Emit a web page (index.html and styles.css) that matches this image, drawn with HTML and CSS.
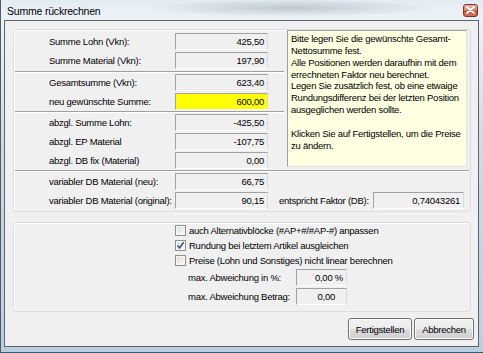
FILE: index.html
```html
<!DOCTYPE html>
<html lang="de">
<head>
<meta charset="utf-8">
<title>Summe rückrechnen</title>
<link rel="stylesheet" href="styles.css">
</head>
<body>
<div class="window">
  <div class="titlebar">
    <span class="title">Summe rückrechnen</span>
    <span class="close">
      <svg width="9" height="8" viewBox="0 0 9 8"><path d="M1 1 L8 7 M8 1 L1 7" stroke="#fff" stroke-width="1.8" stroke-linecap="round"/></svg>
    </span>
  </div>
  <div class="client">
    <div class="group group-calc">
      <div class="calc-top">
        <div class="calc-left">
          <div class="row"><span class="label">Summe Lohn (Vkn):</span><span class="field">425,50</span></div>
          <div class="row"><span class="label">Summe Material (Vkn):</span><span class="field">197,90</span></div>
          <div class="sep sep-first"></div>
          <div class="row"><span class="label">Gesamtsumme (Vkn):</span><span class="field">623,40</span></div>
          <div class="row"><span class="label">neu gewünschte Summe:</span><span class="field field-yellow">600,00</span></div>
          <div class="sep"></div>
          <div class="row"><span class="label">abzgl. Summe Lohn:</span><span class="field">-425,50</span></div>
          <div class="row"><span class="label">abzgl. EP Material</span><span class="field">-107,75</span></div>
          <div class="row"><span class="label">abzgl. DB fix (Material)</span><span class="field">0,00</span></div>
        </div>
        <div class="info">Bitte legen Sie die gewünschte Gesamt-<br>Nettosumme fest.<br>Alle Positionen werden daraufhin mit dem<br>errechneten Faktor neu berechnet.<br>Legen Sie zusätzlich fest, ob eine etwaige<br>Rundungsdifferenz bei der letzten Position<br>ausgeglichen werden sollte.<br><br>Klicken Sie auf Fertigstellen, um die Preise<br>zu ändern.</div>
      </div>
      <div class="sep sep-full"></div>
      <div class="calc-bottom">
        <div class="row"><span class="label">variabler DB Material (neu):</span><span class="field">66,75</span></div>
        <div class="row"><span class="label">variabler DB Material (original):</span><span class="field">90,15</span><span class="label label-faktor">entspricht Faktor (DB):</span><span class="field field-faktor">0,74043261</span></div>
      </div>
    </div>
    <div class="group group-options">
      <div class="check-row"><span class="checkbox"></span><span>auch Alternativblöcke (#AP+#/#AP-#) anpassen</span></div>
      <div class="check-row"><span class="checkbox checked"><svg width="9" height="9" viewBox="0 0 9 9"><path d="M1.5 4.5 L3.6 7 L7.6 1.2" fill="none" stroke="#3d5291" stroke-width="1.6"/></svg></span><span>Rundung bei letztem Artikel ausgleichen</span></div>
      <div class="check-row"><span class="checkbox"></span><span>Preise (Lohn und Sonstiges) nicht linear berechnen</span></div>
      <div class="max-row"><span class="max-label">max. Abweichung in %:</span><span class="field field-small">0,00 %</span></div>
      <div class="max-row"><span class="max-label">max. Abweichung Betrag:</span><span class="field field-small field-betrag">0,00</span></div>
    </div>
    <div class="buttons">
      <button class="btn btn-ok">Fertigstellen</button>
      <button class="btn btn-cancel">Abbrechen</button>
    </div>
  </div>
</div>
</body>
</html>
```

FILE: styles.css
```css
* { box-sizing: border-box; }
html, body { margin: 0; padding: 0; }
body {
  width: 483px;
  height: 353px;
  overflow: hidden;
  font-family: "Liberation Sans", Arial, sans-serif;
  font-size: 9.5px;
  letter-spacing: -0.25px;
  color: #000;
  background: #2f6f7f;
}
.window {
  width: 483px;
  height: 353px;
  display: flex;
  flex-direction: column;
  padding: 0 4px 5px 3px;
  border-left: 1px solid #4f5b66;
  border-bottom: 1px solid #24606e;
  background:
    radial-gradient(ellipse 140px 9px at 290px 8px, rgba(120,130,140,0.35), rgba(120,130,140,0) 100%),
    linear-gradient(to bottom, #e3ebf3 0, #edf2f7 18px, #cfdbe6 40%, #bccede 100%);
}
.titlebar {
  height: 20px;
  display: flex;
  align-items: center;
  padding: 2px 1px 0 3px;
}
.title {
  flex: 1;
  font-size: 10.5px;
  letter-spacing: -0.2px;
  color: #000;
}
.close {
  width: 15px;
  height: 13px;
  margin-top: -2px;
  display: flex;
  align-items: center;
  justify-content: center;
  border: 1px solid #7a3328;
  border-radius: 3px;
  background: linear-gradient(to bottom, #eab3a4 0, #d98a76 45%, #c4503c 55%, #d5725c 100%);
}
.client {
  flex: 1;
  display: flex;
  flex-direction: column;
  background: #f0f0f0;
  border: 1px solid #5a6570;
}
.group {
  margin: 0 7px 0 8px;
  border: 1px solid #d5dfe5;
  border-radius: 3px;
  box-shadow: inset 1px 1px 0 #ffffff;
}
.group-calc {
  margin-top: 8px;
  height: 183px;
  padding-bottom: 1px;
}
.calc-top {
  display: flex;
  align-items: flex-start;
}
.calc-left {
  width: 273px;
  padding-top: 2px;
}
.row {
  height: 19px;
  display: flex;
  align-items: center;
}
.label {
  width: 161px;
  padding-left: 35px;
  white-space: nowrap;
}
.field {
  width: 93px;
  height: 17px;
  padding: 0 3px;
  line-height: 15px;
  text-align: right;
  white-space: nowrap;
  background: #f0f0f0;
  border: 1px solid;
  border-color: #a2a2a2 #dadada #ffffff #a2a2a2;
}
.field-yellow { background: #ffff00; }
.label-faktor {
  width: 94px;
  padding-left: 0;
  margin-left: 11px;
}
.field-faktor { width: 91px; }
.sep {
  height: 2px;
  margin: 0 3px 0 1px;
  border-top: 1px solid #a0a0a0;
  border-bottom: 1px solid #ffffff;
}
.sep-first { margin-top: 1px; }
.sep-full { margin: 0 1px; }
.info {
  width: 180px;
  height: 137px;
  padding: 2px 3px;
  line-height: 11.85px;
  white-space: nowrap;
  background: #ffffe1;
  border: 1px solid;
  border-color: #a0a0a0 #e2e2e2 #e2e2e2 #a0a0a0;
}
.group-options {
  margin-top: 10px;
  height: 90px;
  padding-bottom: 5px;
}
.check-row {
  height: 15px;
  display: flex;
  align-items: center;
  padding-left: 161px;
  white-space: nowrap;
}
.checkbox {
  width: 11px;
  height: 11px;
  margin-right: 3px;
  display: flex;
  align-items: center;
  justify-content: center;
  border: 1px solid #8e8f8f;
  background: linear-gradient(135deg, #d8d8d8 0, #f4f4f4 70%, #fdfdfd 100%);
  box-shadow: inset 0 0 0 1px #f7f7f7;
}
.max-row {
  height: 19px;
  display: flex;
  align-items: center;
}
.max-label {
  width: 282px;
  padding-left: 174px;
  white-space: nowrap;
}
.field-small { width: 51px; }
.field-betrag { padding-right: 11px; }
.buttons {
  margin-top: 6px;
  height: 22px;
  display: flex;
  justify-content: flex-end;
  gap: 2px;
  padding-right: 4px;
}
.btn {
  height: 22px;
  padding: 0;
  font-family: inherit;
  font-size: 9.5px;
  letter-spacing: -0.25px;
  color: #000;
  border: 1px solid #707070;
  border-radius: 3px;
  background: linear-gradient(to bottom, #f2f2f2 0, #ebebeb 48%, #dddddd 52%, #cfcfcf 100%);
  box-shadow: inset 0 0 0 1px #fbfbfb;
}
.btn-ok { width: 64px; }
.btn-cancel { width: 60px; }
```
